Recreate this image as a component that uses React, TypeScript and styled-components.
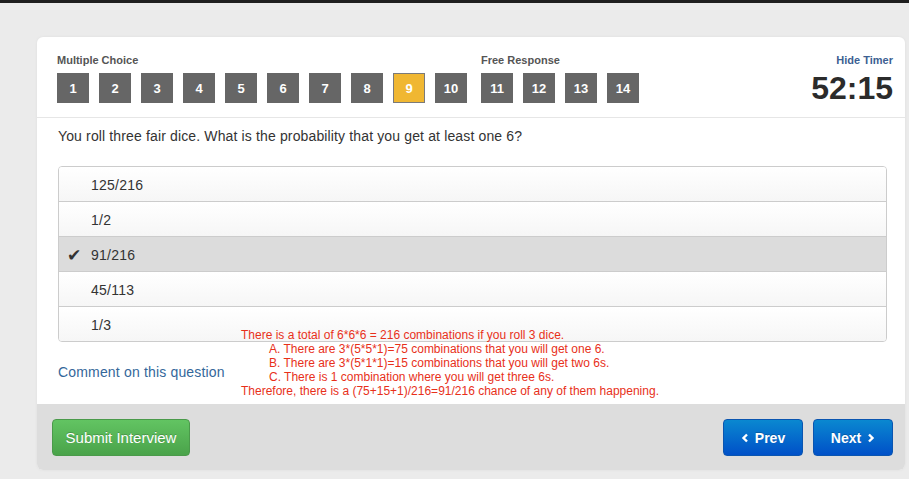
import React from "react";
import styled, { createGlobalStyle } from "styled-components";

const Global = createGlobalStyle`
  html, body { margin: 0; padding: 0; }
  body {
    background: #ebebeb;
    font-family: "Liberation Sans", Arial, Helvetica, sans-serif;
    color: #333;
    width: 909px;
    height: 479px;
    overflow: hidden;
  }
`;

const TopBar = styled.div`
  height: 3px;
  background: #1f1f1f;
`;

const Card = styled.div`
  margin: 34px 4px 0 37px;
  background: #fff;
  border-radius: 6px;
  box-shadow: 0 0 3px rgba(0, 0, 0, 0.06);
`;

const Header = styled.div`
  display: flex;
  justify-content: space-between;
  align-items: flex-start;
  padding: 16px 12px 14px 20px;
  border-bottom: 1px solid #e6e6e6;
`;

const Groups = styled.div`
  display: flex;
  gap: 14px;
`;

const Group = styled.div`
  display: flex;
  flex-direction: column;
`;

const Label = styled.div`
  font-size: 11px;
  font-weight: bold;
  line-height: 14px;
  color: #555;
  margin-bottom: 6px;
`;

const NumRow = styled.div`
  display: flex;
  gap: 10px;
`;

const NumButton = styled.div<{ $active?: boolean }>`
  width: 32px;
  height: 30px;
  box-sizing: border-box;
  display: flex;
  align-items: center;
  justify-content: center;
  font-size: 13px;
  font-weight: bold;
  color: #fff;
  background: ${(p) => (p.$active ? "#f0b732" : "#666")};
  border: 1px solid ${(p) => (p.$active ? "#7a7a7a" : "#666")};
`;

const TimerCol = styled.div`
  display: flex;
  flex-direction: column;
  align-items: flex-end;
`;

const HideLink = styled.div`
  font-size: 11px;
  font-weight: bold;
  line-height: 14px;
  color: #3d5f92;
  margin-bottom: 6px;
`;

const Timer = styled.div`
  font-size: 32px;
  font-weight: bold;
  line-height: 30px;
  color: #2b2b2b;
`;

const Body = styled.div`
  position: relative;
  padding: 8px 18px 22px 21px;
`;

const Question = styled.div`
  font-size: 14px;
  line-height: 20px;
  letter-spacing: 0.14px;
  color: #333;
  margin-bottom: 20px;
`;

const AnswerList = styled.div`
  border: 1px solid #ccc;
  border-radius: 4px;
  overflow: hidden;
`;

const Answer = styled.div<{ $selected?: boolean }>`
  height: 32px;
  padding-top: 2px;
  display: flex;
  align-items: center;
  font-size: 14px;
  letter-spacing: 0.25px;
  color: #333;
  background: ${(p) =>
    p.$selected ? "#dcdcdc" : "linear-gradient(#ffffff, #f6f6f6)"};
  & + & {
    border-top: 1px solid #ccc;
  }
`;

const Check = styled.span`
  width: 32px;
  padding-left: 8px;
  box-sizing: border-box;
  font-family: "DejaVu Sans", sans-serif;
  font-size: 17px;
  color: #333;
`;

const CommentLink = styled.div`
  margin-top: 20px;
  font-size: 14px;
  line-height: 20px;
  letter-spacing: 0.17px;
  color: #34679a;
`;

const Explanation = styled.div`
  position: absolute;
  left: 204px;
  top: 210px;
  font-size: 12px;
  line-height: 14px;
  color: #e8301a;
  white-space: nowrap;
`;

const ExplLine = styled.div<{ $indent?: boolean }>`
  padding-left: ${(p) => (p.$indent ? "28px" : "0")};
`;

const Footer = styled.div`
  display: flex;
  justify-content: space-between;
  align-items: center;
  background: #dddddd;
  padding: 15px 12px 14px 15px;
  border-radius: 0 0 6px 6px;
`;

const NavGroup = styled.div`
  display: flex;
  gap: 10px;
`;

const Btn = styled.div<{ $variant: "success" | "primary"; $w: number }>`
  width: ${(p) => p.$w}px;
  height: 37px;
  box-sizing: border-box;
  display: flex;
  align-items: center;
  justify-content: center;
  gap: 6px;
  border-radius: 4px;
  color: #fff;
  font-size: ${(p) => (p.$variant === "primary" ? "14px" : "15px")};
  font-weight: ${(p) => (p.$variant === "primary" ? "bold" : "normal")};
  text-shadow: 0 -1px 0 rgba(0, 0, 0, 0.2);
  background: ${(p) =>
    p.$variant === "success"
      ? "linear-gradient(#62c462, #4aa34a)"
      : "linear-gradient(#0a88d0, #0050c8)"};
  border: 1px solid
    ${(p) => (p.$variant === "success" ? "#4a9a4a" : "#0a55b0")};
`;

const Chevron = ({ dir }: { dir: "left" | "right" }) => (
  <svg width="8" height="10" viewBox="0 0 8 10">
    <path
      d={dir === "left" ? "M6 1.5 L2.5 5 L6 8.5" : "M2 1.5 L5.5 5 L2 8.5"}
      fill="none"
      stroke="#fff"
      strokeWidth="2.4"
    />
  </svg>
);

const answers = ["125/216", "1/2", "91/216", "45/113", "1/3"];

export default function App() {
  return (
    <>
      <Global />
      <TopBar />
      <Card>
        <Header>
          <Groups>
            <Group>
              <Label>Multiple Choice</Label>
              <NumRow>
                {[1, 2, 3, 4, 5, 6, 7, 8, 9, 10].map((n) => (
                  <NumButton key={n} $active={n === 9}>
                    {n}
                  </NumButton>
                ))}
              </NumRow>
            </Group>
            <Group>
              <Label>Free Response</Label>
              <NumRow>
                {[11, 12, 13, 14].map((n) => (
                  <NumButton key={n}>{n}</NumButton>
                ))}
              </NumRow>
            </Group>
          </Groups>
          <TimerCol>
            <HideLink>Hide Timer</HideLink>
            <Timer>52:15</Timer>
          </TimerCol>
        </Header>
        <Body>
          <Question>
            You roll three fair dice. What is the probability that you get at
            least one 6?
          </Question>
          <AnswerList>
            {answers.map((a, i) => (
              <Answer key={a} $selected={i === 2}>
                <Check>{i === 2 ? "✔" : ""}</Check>
                {a}
              </Answer>
            ))}
          </AnswerList>
          <CommentLink>Comment on this question</CommentLink>
          <Explanation>
            <ExplLine>
              There is a total of 6*6*6 = 216 combinations if you roll 3 dice.
            </ExplLine>
            <ExplLine $indent>
              A. There are 3*(5*5*1)=75 combinations that you will get one 6.
            </ExplLine>
            <ExplLine $indent>
              B. There are 3*(5*1*1)=15 combinations that you will get two 6s.
            </ExplLine>
            <ExplLine $indent>
              C. There is 1 combination where you will get three 6s.
            </ExplLine>
            <ExplLine>
              Therefore, there is a (75+15+1)/216=91/216 chance of any of them
              happening.
            </ExplLine>
          </Explanation>
        </Body>
        <Footer>
          <Btn $variant="success" $w={138}>
            Submit Interview
          </Btn>
          <NavGroup>
            <Btn $variant="primary" $w={80}>
              <Chevron dir="left" />
              Prev
            </Btn>
            <Btn $variant="primary" $w={80}>
              Next
              <Chevron dir="right" />
            </Btn>
          </NavGroup>
        </Footer>
      </Card>
    </>
  );
}
